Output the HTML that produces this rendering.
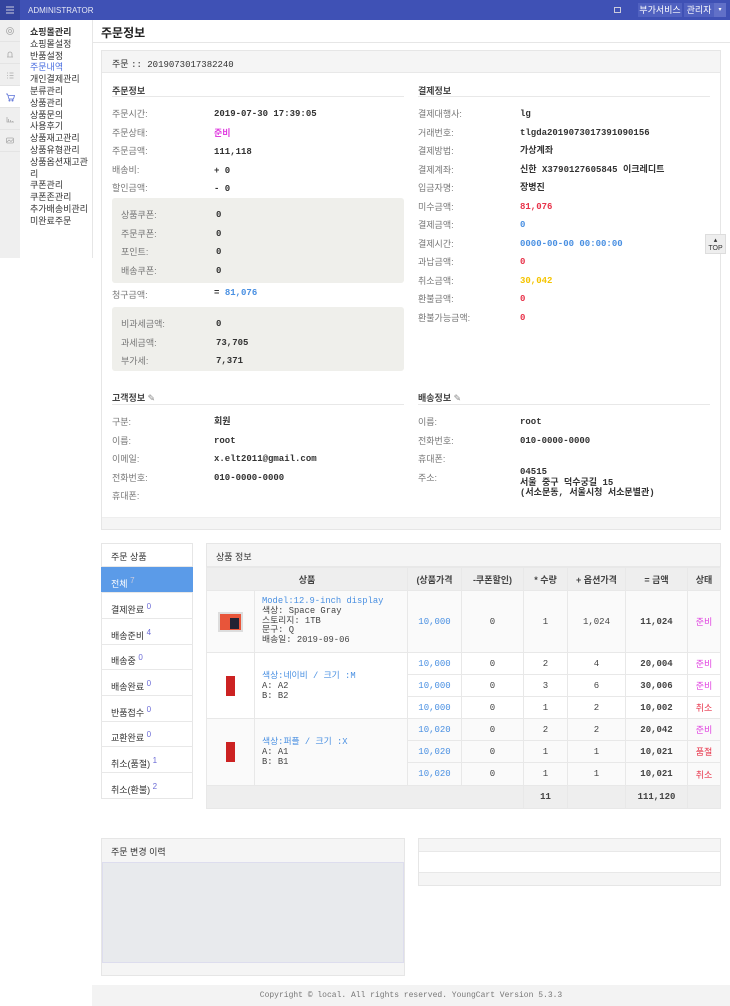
<!DOCTYPE html>
<html><head><meta charset="utf-8"><style>
*{margin:0;padding:0;box-sizing:border-box}
body{width:730px;height:1006px;position:relative;background:#fff;font-family:"Liberation Sans","Noto Sans CJK KR",sans-serif;font-size:9px;color:#333;overflow:hidden}
.a{position:absolute;white-space:nowrap}
.m{font-family:"Liberation Mono","Noto Sans CJK KR",monospace;font-weight:bold;color:#333}
.l{color:#777}
.bx{position:absolute;border:1px solid #e6e6e6;background:#fff}
.hd{position:absolute;background:#f5f5f5;border-bottom:1px solid #e8e8e8}
.gray{position:absolute;background:#efefeb;border-radius:3px}
.blue{color:#4a90e2}.red{color:#e8334a}.pink{color:#e040e0}.yel{color:#f5c400}
table{border-collapse:collapse;position:absolute;font-family:"Liberation Mono","Noto Sans CJK KR",monospace;font-size:9px}
td,th{border:1px solid #e8e8e8;text-align:center;color:#444;font-weight:normal}
th{background:#eee;font-weight:bold;font-family:"Liberation Sans","Noto Sans CJK KR",sans-serif}
.tab{position:absolute;left:101px;width:92px;height:26px;border-bottom:1px solid #e8e8e8;padding:9px 0 0 10px;font-size:9px;color:#333}
.tab sup{color:#6b6bd6;font-size:8px}
.ic{position:absolute;left:0;width:20px;height:22px;border-bottom:1px solid #e4e4e4}
</style></head><body>
<!-- top bar -->
<div class="a" style="left:0;top:0;width:730px;height:20px;background:#3f51b5"></div>
<div class="a" style="left:0;top:0;width:20px;height:20px;background:#34449e"></div>
<svg class="a" style="left:6px;top:6px" width="8" height="8"><path d="M0 1h8M0 4h8M0 7h8" stroke="#ccd" stroke-width="1"/></svg>
<div class="a" style="left:28px;top:6px;color:#e6e8f5;font-size:8px">ADMINISTRATOR</div>
<svg class="a" style="left:614px;top:6px" width="30" height="8"><rect x="0.5" y="1.5" width="6" height="5" fill="none" stroke="#ccd"/><path d="M24 6h6M25 6a2 2 0 0 1 4 0" fill="none" stroke="#ccd"/></svg>
<div class="a" style="left:638px;top:3px;width:44px;height:14px;background:#5061c0;color:#fff;font-size:9px;text-align:center;line-height:14px">부가서비스</div>
<div class="a" style="left:684px;top:3px;width:30px;height:14px;background:#5061c0;color:#fff;font-size:9px;text-align:center;line-height:14px">관리자</div>
<div class="a" style="left:714px;top:3px;width:12px;height:14px;background:#6170c8;color:#fff;font-size:6px;text-align:center;line-height:14px">▾</div>
<!-- left icons -->
<div class="a" style="left:0;top:20px;width:20px;height:238px;background:#efefef"></div>
<div class="ic" style="top:20px"></div><div class="ic" style="top:42px"></div><div class="ic" style="top:64px"></div>
<div class="ic" style="top:86px;background:#fff"></div><div class="ic" style="top:108px"></div><div class="ic" style="top:130px"></div>
<svg class="a" style="left:0;top:20px" width="20" height="132" fill="none" stroke="#aaa" stroke-width="0.8">
<circle cx="10" cy="11" r="3.5"/><circle cx="10" cy="11" r="1.5"/>
<path d="M7 37h6M8 37v-3a2 2 0 0 1 4 0v3"/>
<path d="M7 53h1M7 55.5h1M7 58h1M9.5 53h4M9.5 55.5h4M9.5 58h4"/>
<path d="M6 74h1.5l1.5 5h4.5l1-3.5h-6" stroke="#5a70d8"/><circle cx="9.5" cy="80.5" r=".6" stroke="#5a70d8"/><circle cx="12.5" cy="80.5" r=".6" stroke="#5a70d8"/>
<path d="M7 97v5h7M8.5 102v-3M10.5 102v-2M12.5 102v-1"/>
<rect x="6.5" y="118" width="7" height="5" rx="1"/><path d="M7 122l2-2 2 1.5 2-2"/>
</svg>
<!-- sidebar -->
<div class="a" style="left:20px;top:20px;width:73px;height:238px;border-right:1px solid #e6e6e6;background:#fff"></div>
<div class="a" style="left:30px;top:27px;font-size:9px;line-height:11.8px;color:#333"><b>쇼핑몰관리</b><br>쇼핑몰설정<br>반품설정<br><span style="color:#4a6ee0">주문내역</span><br>개인결제관리<br>분류관리<br>상품관리<br>상품문의<br>사용후기<br>상품재고관리<br>상품유형관리<br>상품옵션재고관<br>리<br>쿠폰관리<br>쿠폰존관리<br>추가배송비관리<br>미완료주문</div>
<!-- page title -->
<div class="a" style="left:101px;top:24px;font-size:12px;font-weight:bold;color:#222">주문정보</div>
<div class="a" style="left:93px;top:42px;width:637px;height:1px;background:#e6e6e6"></div>
<!-- main panel -->
<div class="bx" style="left:101px;top:50px;width:620px;height:480px"></div>
<div class="hd" style="left:102px;top:51px;width:618px;height:22px"></div>
<div class="a" style="left:112px;top:57px;font-size:9px"><span>주문</span> <span style="font-family:'Liberation Mono',monospace">:: 2019073017382240</span></div>
<div class="a" style="left:102px;top:517px;width:618px;height:12px;background:#f5f5f5;border-top:1px solid #eee"></div>

<div class="a" style="left:112px;top:84px;font-weight:bold;color:#444">주문정보</div>
<div class="a" style="left:112px;top:96px;width:292px;height:1px;background:#e8e8e8"></div>
<div class="a" style="left:418px;top:84px;font-weight:bold;color:#444">결제정보</div>
<div class="a" style="left:418px;top:96px;width:292px;height:1px;background:#e8e8e8"></div>

<div class="a l" style="left:112px;top:105px;line-height:18.5px">주문시간:<br>주문상태:<br>주문금액:<br>배송비:<br>할인금액:</div>
<div class="a m" style="left:214px;top:105px;line-height:18.5px">2019-07-30 17:39:05<br><span class="pink" style="font-family:'Noto Sans CJK KR'">준비</span><br>111,118<br>+ 0<br>- 0</div>
<div class="gray" style="left:112px;top:198px;width:292px;height:85px"></div>
<div class="a l" style="left:121px;top:206px;line-height:18.5px">상품쿠폰:<br>주문쿠폰:<br>포인트:<br>배송쿠폰:</div>
<div class="a m" style="left:216px;top:206px;line-height:18.5px">0<br>0<br>0<br>0</div>
<div class="a l" style="left:112px;top:288px">청구금액:</div>
<div class="a m" style="left:214px;top:288px">= <span class="blue">81,076</span></div>
<div class="gray" style="left:112px;top:307px;width:292px;height:64px"></div>
<div class="a l" style="left:121px;top:315px;line-height:18.5px">비과세금액:<br>과세금액:<br>부가세:</div>
<div class="a m" style="left:216px;top:315px;line-height:18.5px">0<br>73,705<br>7,371</div>

<div class="a l" style="left:418px;top:105px;line-height:18.5px">결제대행사:<br>거래번호:<br>결제방법:<br>결제계좌:<br>입금자명:<br>미수금액:<br>결제금액:<br>결제시간:<br>과납금액:<br>취소금액:<br>환불금액:<br>환불가능금액:</div>
<div class="a m" style="left:520px;top:105px;line-height:18.5px">lg<br>tlgda2019073017391090156<br>가상계좌<br>신한 X3790127605845 이크레디트<br>장병진<br><span class="red">81,076</span><br><span class="blue">0</span><br><span class="blue">0000-00-00 00:00:00</span><br><span class="red">0</span><br><span class="yel">30,042</span><br><span class="red">0</span><br><span class="red">0</span></div>

<div class="a" style="left:112px;top:391px;font-weight:bold;color:#444">고객정보 <span style="font-weight:normal;color:#888">✎</span></div>
<div class="a" style="left:112px;top:404px;width:292px;height:1px;background:#e8e8e8"></div>
<div class="a" style="left:418px;top:391px;font-weight:bold;color:#444">배송정보 <span style="font-weight:normal;color:#888">✎</span></div>
<div class="a" style="left:418px;top:404px;width:292px;height:1px;background:#e8e8e8"></div>
<div class="a l" style="left:112px;top:413px;line-height:18.5px">구분:<br>이름:<br>이메일:<br>전화번호:<br>휴대폰:</div>
<div class="a m" style="left:214px;top:413px;line-height:18.5px">회원<br>root<br>x.elt2011@gmail.com<br>010-0000-0000</div>
<div class="a l" style="left:418px;top:413px;line-height:18.5px">이름:<br>전화번호:<br>휴대폰:<br>주소:</div>
<div class="a m" style="left:520px;top:413px;line-height:18.5px">root<br>010-0000-0000</div>
<div class="a m" style="left:520px;top:467px;line-height:10.5px">04515<br>서울 중구 덕수궁길 15<br>(서소문동, 서울시청 서소문별관)</div>

<div class="a" style="left:705px;top:234px;width:21px;height:20px;background:#eee;border:1px solid #ddd;font-size:7px;text-align:center;line-height:8px;padding-top:2px;color:#333">▴<br>TOP</div>

<!-- tabs -->
<div class="bx" style="left:101px;top:543px;width:92px;height:256px"></div>
<div class="hd" style="left:102px;top:544px;width:90px;height:23px;background:#fff"></div>
<div class="a" style="left:111px;top:550px">주문 상품</div>
<div class="tab" style="top:567px;background:#5b9be8;color:#fff">전체 <sup style="color:#ccd">7</sup></div>
<div class="tab" style="top:593px">결제완료 <sup>0</sup></div>
<div class="tab" style="top:619px">배송준비 <sup>4</sup></div>
<div class="tab" style="top:644px">배송중 <sup>0</sup></div>
<div class="tab" style="top:670px">배송완료 <sup>0</sup></div>
<div class="tab" style="top:696px">반품접수 <sup>0</sup></div>
<div class="tab" style="top:721px">교환완료 <sup>0</sup></div>
<div class="tab" style="top:747px">취소(품절) <sup>1</sup></div>
<div class="tab" style="top:773px;border-bottom:none">취소(환불) <sup>2</sup></div>

<!-- product panel -->
<div class="bx" style="left:206px;top:543px;width:515px;height:266px"></div>
<div class="hd" style="left:207px;top:544px;width:513px;height:23px"></div>
<div class="a" style="left:216px;top:550px">상품 정보</div>
<table style="left:206px;top:567px;width:515px">
<tr style="height:23px"><th colspan="2">상품</th><th style="width:54px">(상품가격</th><th style="width:62px">-쿠폰할인)</th><th style="width:44px">* 수량</th><th style="width:58px">+ 옵션가격</th><th style="width:62px">= 금액</th><th style="width:33px">상태</th></tr>
<tr style="height:62px;background:#fafafa"><td style="width:48px"><div style="width:25px;height:20px;margin:auto;background:#e8553a;border:2px solid #ddd;position:relative"><div style="position:absolute;right:2px;top:4px;width:9px;height:11px;background:#223"></div></div></td><td style="text-align:left;padding-left:7px;line-height:9.7px;font-size:8.8px"><span class="blue">Model:12.9-inch display</span><br>색상: Space Gray<br>스토리지: 1TB<br>문구: Q<br>배송일: 2019-09-06</td><td class="blue">10,000</td><td>0</td><td>1</td><td>1,024</td><td style="font-weight:bold">11,024</td><td class="pink" style="font-family:'Noto Sans CJK KR'">준비</td></tr>
<tr style="height:22px"><td rowspan="3"><div style="width:9px;height:20px;margin:auto;background:#c22"></div></td><td rowspan="3" style="text-align:left;padding-left:7px;line-height:10px;font-size:8.8px"><span class="blue">색상:네이비 / 크기 :M</span><br>A: A2<br>B: B2</td><td class="blue">10,000</td><td>0</td><td>2</td><td>4</td><td style="font-weight:bold">20,004</td><td class="pink" style="font-family:'Noto Sans CJK KR'">준비</td></tr>
<tr style="height:22px"><td class="blue">10,000</td><td>0</td><td>3</td><td>6</td><td style="font-weight:bold">30,006</td><td class="pink" style="font-family:'Noto Sans CJK KR'">준비</td></tr>
<tr style="height:22px"><td class="blue">10,000</td><td>0</td><td>1</td><td>2</td><td style="font-weight:bold">10,002</td><td class="red" style="font-family:'Noto Sans CJK KR'">취소</td></tr>
<tr style="height:22px;background:#fafafa"><td rowspan="3"><div style="width:9px;height:20px;margin:auto;background:#c22"></div></td><td rowspan="3" style="text-align:left;padding-left:7px;line-height:10px;font-size:8.8px"><span class="blue">색상:퍼플 / 크기 :X</span><br>A: A1<br>B: B1</td><td class="blue">10,020</td><td>0</td><td>2</td><td>2</td><td style="font-weight:bold">20,042</td><td class="pink" style="font-family:'Noto Sans CJK KR'">준비</td></tr>
<tr style="height:22px;background:#fafafa"><td class="blue">10,020</td><td>0</td><td>1</td><td>1</td><td style="font-weight:bold">10,021</td><td class="red" style="font-family:'Noto Sans CJK KR'">품절</td></tr>
<tr style="height:23px;background:#fafafa"><td class="blue">10,020</td><td>0</td><td>1</td><td>1</td><td style="font-weight:bold">10,021</td><td class="red" style="font-family:'Noto Sans CJK KR'">취소</td></tr>
<tr style="height:23px;background:#eee"><td colspan="4"></td><td style="font-weight:bold">11</td><td></td><td style="font-weight:bold">111,120</td><td></td></tr>
</table>

<!-- history -->
<div class="bx" style="left:101px;top:838px;width:304px;height:138px;background:#f5f5f5"></div>
<div class="a" style="left:111px;top:845px;color:#333">주문 변경 이력</div>
<div class="a" style="left:102px;top:862px;width:302px;height:101px;background:#e8eaed;border:1px solid #dde"></div>
<div class="bx" style="left:418px;top:838px;width:303px;height:48px;background:#f5f5f5"></div>
<div class="a" style="left:419px;top:851px;width:301px;height:22px;background:#fff;border-top:1px solid #e8e8e8;border-bottom:1px solid #e8e8e8"></div>

<div class="a" style="left:92px;top:985px;width:638px;height:21px;background:#f3f3f3;text-align:center;line-height:21px;color:#777;font-family:'Liberation Mono',monospace;font-size:8px">Copyright © local. All rights reserved. YoungCart Version 5.3.3</div>
</body></html>
